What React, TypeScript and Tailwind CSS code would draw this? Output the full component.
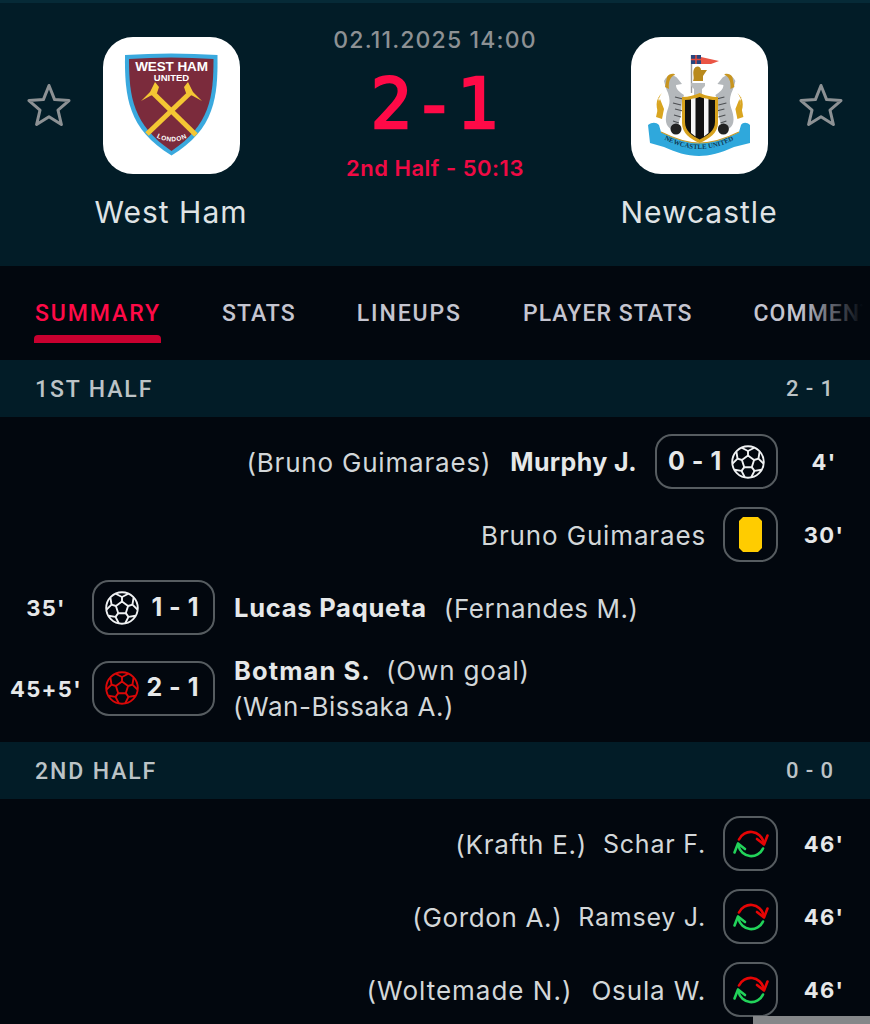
import React from "react";

const pt = (cx: number, cy: number, r: number, deg: number) => {
  const a = ((deg - 90) * Math.PI) / 180;
  return [+(cx + r * Math.cos(a)).toFixed(2), +(cy + r * Math.sin(a)).toFixed(2)];
};

function Ball({ color = "#f0f2f3" }: { color?: string }) {
  const angles = [0, 72, 144, 216, 288];
  const inner = angles.map((d) => pt(17, 17, 6.4, d).join(",")).join(" ");
  return (
    <svg width="34" height="34" viewBox="0 0 34 34" fill="none" stroke={color} strokeWidth="1.9" strokeLinejoin="round">
      <circle cx="17" cy="17" r="15.8" />
      <polygon points={inner} />
      {angles.map((d) => {
        const a = pt(17, 17, 6.4, d);
        const b = pt(17, 17, 11, d);
        const c = pt(17, 17, 15.6, d - 24);
        const e = pt(17, 17, 15.6, d + 24);
        return (
          <g key={d}>
            <path d={`M${a[0]} ${a[1]}L${b[0]} ${b[1]}`} />
            <path d={`M${c[0]} ${c[1]}L${b[0]} ${b[1]}L${e[0]} ${e[1]}`} />
          </g>
        );
      })}
    </svg>
  );
}

function Swap() {
  return (
    <svg width="38" height="34" viewBox="-19 -17 38 34" fill="none" strokeWidth="2.6" strokeLinecap="round" strokeLinejoin="round">
      <g stroke="#e60505">
        <path d="M-12 -4.5A13 13 0 0 1 12.5 -2" />
        <path d="M6 -5L13 0.5L16.5 -8.5" />
      </g>
      <g stroke="#22d35a">
        <path d="M12 4.5A13 13 0 0 1 -12.5 2" />
        <path d="M-6 5L-13 -0.5L-16.5 8.5" />
      </g>
    </svg>
  );
}

function Card() {
  return (
    <svg width="23" height="35" viewBox="0 0 23 35">
      <polygon points="4,0 19,0 23,4 23,31 19,35 4,35 0,31 0,4" fill="#ffcc00" />
    </svg>
  );
}

function StarIcon() {
  return (
    <svg width="44" height="44" viewBox="0 0 44 44" fill="none" stroke="#8d9194" strokeWidth="3" strokeLinejoin="round">
      <path d="M22 2.5L27.6 16.6L42 17.6L31 27.1L34.4 41.5L22 33.7L9.6 41.5L13 27.1L2 17.6L16.4 16.6Z" />
    </svg>
  );
}

function WestHamCrest() {
  return (
    <svg width="137" height="137" viewBox="0 0 137 137">
      <path d="M22 18Q68 15 114.500 18C115 60 112 92 68.500 118.500C25 92 21.500 60 22 18Z" fill="#3aa9de" />
      <path d="M26 22Q68 19 110.500 22C110.500 60 107 88 68.500 114C30 88 26 60 26 22Z" fill="#7b2b3c" />
      <text x="68.500" y="34" textAnchor="middle" fill="#fff" fontSize="13.500" fontWeight="800" fontFamily="'Liberation Sans',sans-serif" letterSpacing="-0.1">WEST HAM</text>
      <text x="68.500" y="44" textAnchor="middle" fill="#fff" fontSize="9.500" fontWeight="800" fontFamily="'Liberation Sans',sans-serif">UNITED</text>
      <g stroke="#f4c733" strokeWidth="5" strokeLinecap="butt">
        <path d="M49 55L93 98" />
        <path d="M88 55L44 97" />
      </g>
      <path d="M38 64L47 55L52 45L56 50L54 56L47 59Z" fill="#f4c733" />
      <path d="M99 64L90 55L85 45L81 50L83 56L90 59Z" fill="#f4c733" />
      <path id="wh-london" d="M51 99Q68.500 110 87 99" fill="none" />
      <text fontSize="6.500" fontWeight="700" fill="#fff" fontFamily="'Liberation Sans',sans-serif" letterSpacing="0.7" textAnchor="middle">
        <textPath href="#wh-london" startOffset="50%">LONDON</textPath>
      </text>
    </svg>
  );
}

function Seahorse({ flip = false }: { flip?: boolean }) {
  return (
    <g transform={flip ? "translate(137.400 0) scale(-1 1)" : undefined}>
      <path d="M30 80C24 72 24 62 31 56C26 62 27 68 32 71L27 60Z" fill="#d9a520" />
      <path d="M25 80L29 62L33 72L31 82Z" fill="#d9a520" />
      <path d="M33 44C36 37 44 37 47 42L51 47L45 48C45 53 49 55 53 58L51 64C50 76 50 84 44 94C38 92 34 88 35 80C36 70 41 68 37 56C35 52 34 48 33 44Z" fill="#b4b8bb" />
      <path d="M36 40C38 36 44 36 44 38C40 39 37 44 38 52L34 50Z" fill="#c8951f" />
      <path d="M44 72L52 74M43 78L50 80M42 84L48 86M44 60L52 62M42 66L50 68" stroke="#4c4f52" strokeWidth="1.100" />
      <circle cx="45" cy="92" r="5.500" fill="#222" />
    </g>
  );
}

function NewcastleCrest() {
  return (
    <svg width="137" height="137" viewBox="0 0 137 137">
      <path d="M60.500 18V56" stroke="#9a9a9a" strokeWidth="1.400" />
      <path d="M60 18L70 20L88 24L80 27L70 27L60 26Z" fill="#ea5545" />
      <rect x="60" y="18" width="10" height="9" fill="#27457e" />
      <path d="M65 18V27M60 22.500H70" stroke="#e24a3c" strokeWidth="1.500" />
      <path d="M63 32C65 28 70 29 70 33L76 33L72 39L72 44L62 44C64 40 61 37 63 32Z" fill="#b98a1d" />
      <path d="M60 46H74V49L71 52V58H63V52L60 49Z" fill="#b9bcbe" />
      <Seahorse />
      <Seahorse flip />
      <path d="M51 60C58 60 64 58 68.700 56C73 58 80 60 87 60V86C87 96 78 102 68.700 106C59 102 51 96 51 86Z" fill="#d7a21d" />
      <path d="M54 63C60 63 65 61 68.700 60C72 61 78 63 84 63V85C84 94 76 99 68.700 102.500C61 99 54 94 54 85Z" fill="#101010" />
      <path d="M60 62V96L64.500 99.500V61ZM73 61V99.500L77.500 96V62Z" fill="#f4f4f4" />
      <path d="M17 88C21 85 25 85 28 88L30 95C46 103 58 106 68 106C82 106 94 102 108 95L110 88C112 85 116 85 119 88L119 106L103 110C90 116 78 119 68 119C56 119 44 115 33 110L19 106Z" fill="#2fa8dc" />
      <path d="M30 95C46 103 58 106 68 106C82 106 94 102 108 95" fill="none" stroke="#c99a2a" strokeWidth="1.200" />
      <path id="nc-rib" d="M28 100C44 108 56 112 68 112C82 112 94 108 108 100" fill="none" />
      <text fontSize="6.800" fontWeight="700" fill="#113a55" fontFamily="'Liberation Serif',serif" textAnchor="middle" letterSpacing="0.100">
        <textPath href="#nc-rib" startOffset="50%">NEWCASTLE UNITED</textPath>
      </text>
    </svg>
  );
}

function Team({ name, children }: { name: string; children: React.ReactNode }) {
  return (
    <div className="flex flex-col items-center w-[180px]">
      <div className="w-[137px] h-[137px] rounded-[30px] bg-white overflow-hidden">{children}</div>
      <div className="mt-[20px] text-[30px] leading-[36px] tracking-[1px] text-[#dfe3e5]">{name}</div>
    </div>
  );
}

function Pill({ left, children }: { left?: boolean; children: React.ReactNode }) {
  return (
    <div
      className={
        "h-[55px] w-[123px] shrink-0 border-2 border-[#565c60] rounded-[17px] flex items-center justify-between text-[25px] font-bold text-[#e6e8e9] tracking-[0.5px] " +
        (left ? "pl-[11px] pr-[14px]" : "px-[11px]")
      }
    >
      {children}
    </div>
  );
}

function IconBox({ children }: { children: React.ReactNode }) {
  return (
    <div className="h-[55px] w-[55px] shrink-0 border-2 border-[#565c60] rounded-[17px] flex items-center justify-center">
      {children}
    </div>
  );
}

function Time({ t }: { t: string }) {
  return (
    <div className="w-[92px] shrink-0 pt-[2px] text-center text-[22px] font-bold tracking-[1.3px] text-[#e6e8e9]">{t}</div>
  );
}

function Right({
  assist,
  name,
  bold,
  icon,
  t,
  assistClass = "",
  nameClass = "",
}: {
  assist?: string;
  name: string;
  bold?: boolean;
  icon: React.ReactNode;
  t: string;
  assistClass?: string;
  nameClass?: string;
}) {
  return (
    <div className="h-[73px] flex items-center justify-end gap-[19px] text-[26px] tracking-[0.85px] text-[#d3d7d9]">
      {assist && <span className={"pt-[2px] " + assistClass}>{assist}</span>}
      <span className={"pt-[2px] " + (bold ? "font-bold text-[25px] tracking-[0.4px] text-[#e6e8e9]" : nameClass)}>{name}</span>
      <div className={"flex items-center " + (bold ? "ml-[-1px]" : "ml-[-2px]")}>
        {icon}
        <Time t={t} />
      </div>
    </div>
  );
}

function Section({ title, score }: { title: string; score: string }) {
  return (
    <div className="h-[57px] bg-[#021c27] flex items-center justify-between pl-[35px] pr-[36px] font-['Roboto',sans-serif] font-medium text-[#bcc3c6]">
      <span className="pt-[3px] text-[23px] tracking-[1.9px]">{title}</span>
      <span className="text-[22px] tracking-[0.9px]">{score}</span>
    </div>
  );
}

export default function App() {
  return (
    <div className="relative w-[870px] h-[1024px] overflow-hidden bg-[#02070e] font-['Inter',sans-serif]">
      <header className="h-[266px] bg-[#021c27] border-t-[3px] border-[#062a37] flex items-start">
        <div className="pl-[27px] pt-[80px]"><StarIcon /></div>
        <div className="ml-[10px] pt-[34px]"><Team name="West Ham"><WestHamCrest /></Team></div>
        <div className="flex-1 flex flex-col items-center pt-[23px]">
          <div className="text-[23px] leading-[28px] tracking-[1.15px] text-[#8d9194] font-medium">02.11.2025 14:00</div>
          <div className="mt-[9px] text-[69px] leading-[82px] tracking-[1.5px] text-[#ff0a47] font-['DejaVu_Sans_Mono',monospace] font-normal [-webkit-text-stroke:2.5px_#ff0a47]">2-1</div>
          <div className="mt-[9px] text-[22px] leading-[28px] tracking-[0.5px] text-[#f00a44] font-semibold">2nd Half - 50:13</div>
        </div>
        <div className="mr-[10px] pt-[34px]"><Team name="Newcastle"><NewcastleCrest /></Team></div>
        <div className="pr-[27px] pt-[80px]"><StarIcon /></div>
      </header>

      <nav className="relative h-[94px] pt-[2px] flex items-center gap-[61px] pl-[35px] text-[23px] font-medium tracking-[1.05px] whitespace-nowrap font-['Roboto',sans-serif] text-[#c5c5d0] overflow-hidden">
        <div className="relative text-[#ff0a47] tracking-[1.9px]">
          SUMMARY
          <div className="absolute left-[-1px] right-0 top-[38px] h-[8px] bg-[#c8002f] rounded-t-[4px]" />
        </div>
        <span>STATS</span>
        <span className="tracking-[1.9px]">LINEUPS</span>
        <span>PLAYER STATS</span>
        <span>COMMENTARY</span>
        <div className="absolute right-0 top-0 bottom-0 w-[70px] bg-gradient-to-r from-transparent to-[#02070e] to-[90%]" />
      </nav>

      <Section title="1ST HALF" score="2 - 1" />
      <div className="pt-[8px] pb-[10px]">
        <Right
          assist="(Bruno Guimaraes)"
          name="Murphy J."
          bold
          assistClass="tracking-[0.8px]"
          icon={<Pill><span>0 - 1</span><Ball /></Pill>}
          t="4'"
        />
        <Right name="Bruno Guimaraes" icon={<IconBox><Card /></IconBox>} t="30'" />
        <div className="h-[73px] flex items-center text-[26px] tracking-[0.85px] text-[#d3d7d9]">
          <Time t="35'" />
          <Pill left><Ball /><span>1 - 1</span></Pill>
          <span className="ml-[19px] pt-[2px] font-bold text-[25.5px] tracking-[0.75px] text-[#e6e8e9]">Lucas Paqueta</span>
          <span className="ml-[17px] pt-[2px] tracking-[0.55px]">(Fernandes M.)</span>
        </div>
        <div className="h-[88px] flex items-center text-[26px] tracking-[0.85px] text-[#d3d7d9]">
          <Time t="45+5'" />
          <Pill left><Ball color="#d90808" /><span>2 - 1</span></Pill>
          <div className="ml-[18px] pt-[2px] leading-[36px]">
            <div className="pl-[1px]">
              <span className="font-bold text-[25.5px] tracking-[1.1px] text-[#e6e8e9]">Botman S.</span>
              <span className="ml-[15px]">(Own goal)</span>
            </div>
            <div className="tracking-[0.55px]">(Wan-Bissaka A.)</div>
          </div>
        </div>
      </div>

      <Section title="2ND HALF" score="0 - 0" />
      <div className="pt-[8px]">
        <Right
          assist="(Krafth E.)"
          name="Schar F."
          assistClass="tracking-[0.7px] mr-[-3px]"
          nameClass="text-[25px] tracking-[0.8px]"
          icon={<IconBox><Swap /></IconBox>}
          t="46'"
        />
        <Right
          assist="(Gordon A.)"
          name="Ramsey J."
          assistClass="tracking-[0.65px] mr-[-3px]"
          nameClass="text-[25px] tracking-[0.75px]"
          icon={<IconBox><Swap /></IconBox>}
          t="46'"
        />
        <Right
          assist="(Woltemade N.)"
          name="Osula W."
          assistClass="tracking-[1px]"
          icon={<IconBox><Swap /></IconBox>}
          t="46'"
        />
      </div>

      <div className="absolute left-[753px] right-0 bottom-0 h-[8px] bg-[#858789]" />
    </div>
  );
}
